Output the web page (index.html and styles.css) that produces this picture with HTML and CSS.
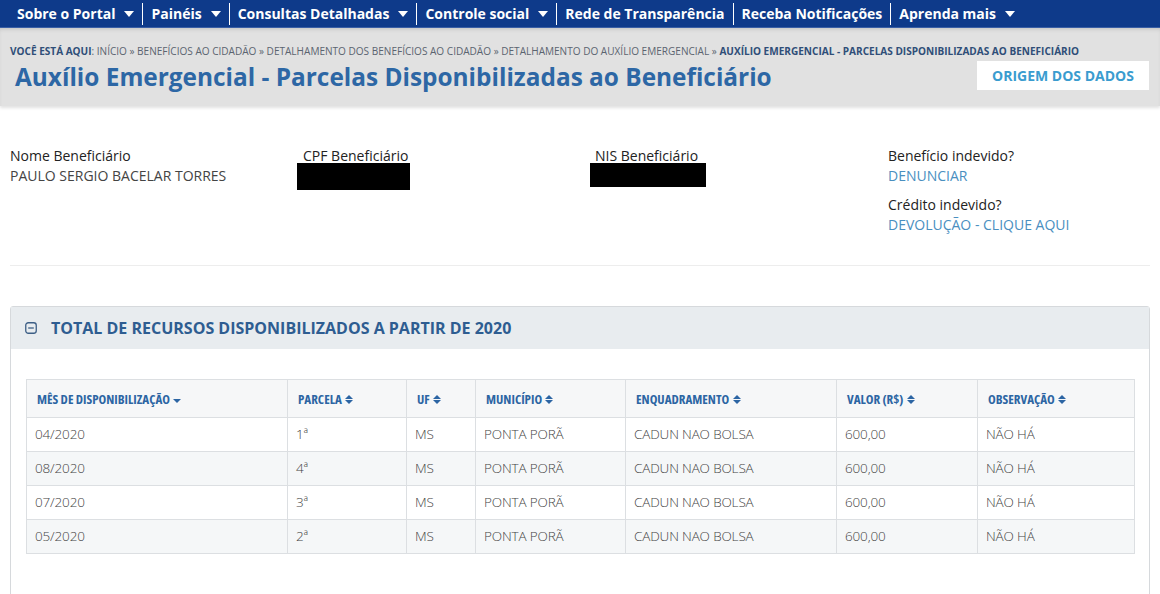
FILE: index.html
```html
<!DOCTYPE html>
<html lang="pt-BR">
<head>
<meta charset="utf-8">
<title>Auxílio Emergencial - Parcelas Disponibilizadas ao Beneficiário</title>
<link rel="stylesheet" href="styles.css">
</head>
<body>
<nav class="topnav">
  <ul class="menu">
    <li class="item first">Sobre o Portal <span class="caret"></span></li>
    <li class="item">Painéis <span class="caret"></span></li>
    <li class="item">Consultas Detalhadas <span class="caret"></span></li>
    <li class="item">Controle social <span class="caret"></span></li>
    <li class="item">Rede de Transparência</li>
    <li class="item">Receba Notificações</li>
    <li class="item">Aprenda mais <span class="caret"></span></li>
  </ul>
</nav>

<header class="pagehead">
  <div class="breadcrumb"><strong>VOCÊ ESTÁ AQUI</strong>: INÍCIO » BENEFÍCIOS AO CIDADÃO » DETALHAMENTO DOS BENEFÍCIOS AO CIDADÃO » DETALHAMENTO DO AUXÍLIO EMERGENCIAL » <b class="current">AUXÍLIO EMERGENCIAL - PARCELAS DISPONIBILIZADAS AO BENEFICIÁRIO</b></div>
  <div class="titlerow">
    <h1 class="title">Auxílio Emergencial - Parcelas Disponibilizadas ao Beneficiário</h1>
    <a class="origem">ORIGEM DOS DADOS</a>
  </div>
</header>

<section class="info">
  <div class="field">
    <div class="label">Nome Beneficiário</div>
    <div class="value">PAULO SERGIO BACELAR TORRES</div>
  </div>
  <div class="field">
    <div class="label">CPF Beneficiário</div>
    <div class="redact cpf"></div>
  </div>
  <div class="field">
    <div class="label">NIS Beneficiário</div>
    <div class="redact nis"></div>
  </div>
  <div class="field">
    <div class="label">Benefício indevido?</div>
    <a class="link">DENUNCIAR</a>
    <div class="label second">Crédito indevido?</div>
    <a class="link">DEVOLUÇÃO - CLIQUE AQUI</a>
  </div>
</section>

<hr class="divider">

<section class="panel">
  <div class="panel-head">
    <svg class="collapse" width="12" height="12" viewBox="0 0 12 12" aria-hidden="true">
      <rect x="0.75" y="0.75" width="10.5" height="10.5" rx="2.5" fill="none" stroke="#3d5f86" stroke-width="1.3"/>
      <line x1="3.2" y1="6" x2="8.8" y2="6" stroke="#3d5f86" stroke-width="1.3"/>
    </svg>
    <h2 class="panel-title">TOTAL DE RECURSOS DISPONIBILIZADOS A PARTIR DE 2020</h2>
  </div>
  <div class="panel-body">
    <table class="grid">
      <colgroup>
        <col class="c1"><col class="c2"><col class="c3"><col class="c4"><col class="c5"><col class="c6"><col class="c7">
      </colgroup>
      <thead>
        <tr>
          <th>MÊS DE DISPONIBILIZAÇÃO <span class="sort-down"></span></th>
          <th>PARCELA <span class="sort"></span></th>
          <th>UF <span class="sort"></span></th>
          <th>MUNICÍPIO <span class="sort"></span></th>
          <th>ENQUADRAMENTO <span class="sort"></span></th>
          <th>VALOR (R$) <span class="sort"></span></th>
          <th>OBSERVAÇÃO <span class="sort"></span></th>
        </tr>
      </thead>
      <tbody>
        <tr><td>04/2020</td><td>1ª</td><td>MS</td><td>PONTA PORÃ</td><td>CADUN NAO BOLSA</td><td>600,00</td><td>NÃO HÁ</td></tr>
        <tr><td>08/2020</td><td>4ª</td><td>MS</td><td>PONTA PORÃ</td><td>CADUN NAO BOLSA</td><td>600,00</td><td>NÃO HÁ</td></tr>
        <tr><td>07/2020</td><td>3ª</td><td>MS</td><td>PONTA PORÃ</td><td>CADUN NAO BOLSA</td><td>600,00</td><td>NÃO HÁ</td></tr>
        <tr><td>05/2020</td><td>2ª</td><td>MS</td><td>PONTA PORÃ</td><td>CADUN NAO BOLSA</td><td>600,00</td><td>NÃO HÁ</td></tr>
      </tbody>
    </table>
  </div>
</section>
</body>
</html>
```

FILE: styles.css
```css
* { box-sizing: border-box; }
html, body { margin: 0; padding: 0; background: #fff; }
body {
  font-family: "Open Sans", "Liberation Sans", sans-serif;
  color: #333;
  width: 1160px;
  height: 594px;
  overflow: hidden;
}

/* top navigation */
.topnav { background: #0e3a8a; height: 28px; border-bottom: 1px solid #3a5fa6; }
.menu {
  list-style: none; margin: 0; padding: 0 0 0 7px;
  display: flex; align-items: center; height: 27px;
}
.item {
  color: #fff; font-weight: 700; font-size: 14px; line-height: 22px;
  padding: 0 8px 0 8px; border-left: 1px solid #fff;
  letter-spacing: 0; white-space: nowrap;
  display: flex; align-items: center; gap: 7px;
}
.item.first { border-left: none; padding-left: 10px; }
.caret {
  display: inline-block; width: 0; height: 0;
  border-left: 5px solid transparent; border-right: 5px solid transparent;
  border-top: 6px solid #fff; margin-left: 2px;
}

/* page header */
.pagehead {
  background: #e1e1e1;
  padding: 16px 11px 13px 10px;
  box-shadow: 0 2px 3px rgba(0,0,0,0.12), inset 0 3px 4px -2px rgba(0,0,0,0.15);
}
.breadcrumb {
  font-size: 10.05px; line-height: 14px; color: #5b6470;
  letter-spacing: 0; white-space: nowrap;
}
.breadcrumb strong { color: #2f4e78; font-weight: 700; }
.breadcrumb .current { color: #2f4e78; font-weight: 700; }
.titlerow { display: flex; justify-content: space-between; align-items: center; margin-top: 3px; }
.title {
  margin: 0 0 0 5px; font-size: 24.4px; line-height: 32px; font-weight: 700;
  color: #2d67a5; letter-spacing: 0;
}
.origem {
  background: #fff; color: #3a9ccf; font-weight: 700; font-size: 14px;
  width: 172px; height: 29px; display: flex; align-items: center; justify-content: center;
  margin-top: -3px;
}

/* beneficiary info */
.info {
  display: grid; grid-template-columns: 293px 292px 293px 1fr;
  padding: 40px 10px 0 10px;
}
.label { font-size: 14px; line-height: 20px; color: #222; }
.label.second { margin-top: 9px; }
.value { font-size: 14px; line-height: 20px; color: #444; font-weight: 400; letter-spacing: 0; }
.link { display: block; font-size: 14px; line-height: 20px; color: #4a8fbf; font-weight: 400; }
.redact { background: #000; margin-top: -3px; }
.redact.cpf { width: 113px; height: 27px; margin-left: -6px; }
.redact.nis { width: 116px; height: 24px; margin-left: -5px; }

.divider { border: 0; border-top: 1px solid #ededed; margin: 30px 10px 0 10px; }

/* panel */
.panel {
  margin: 40px 10px 0 10px;
  border: 1px solid #d6d9dc; border-radius: 3px;
  height: 300px;
}
.panel-head {
  background: #e8ecef; height: 42px;
  display: flex; align-items: center; padding-left: 14px; gap: 14px;
}
.collapse { flex: none; }
.panel-title {
  margin: 0; font-size: 16px; font-weight: 700; color: #2e5d91; letter-spacing: 0;
}
.panel-body { padding: 30px 15px 0 15px; }

.grid { border-collapse: collapse; table-layout: fixed; width: 1108px; }
.c1 { width: 261px; } .c2 { width: 119px; } .c3 { width: 69px; } .c4 { width: 150px; }
.c5 { width: 211px; } .c6 { width: 141px; } .c7 { width: 157px; }
.grid th, .grid td { border: 1px solid #dcdfe2; text-align: left; padding: 0 10px 0 10px; }
.grid th {
  height: 38px; background: #f6f7f8; color: #2c65a3;
  font-size: 13px; font-weight: 700; font-stretch: 75%;
  letter-spacing: 0; white-space: nowrap;
}
.grid td { height: 34px; font-size: 13.5px; color: #444; font-weight: 300; letter-spacing: -0.15px; padding-left: 8px; padding-bottom: 2px; }
.grid th { padding-left: 10px; }
.grid tbody tr:nth-child(even) td { background: #f5f7f8; }
.sort, .sort-down { display: inline-block; width: 8px; height: 10px; vertical-align: -1px; position: relative; margin-left: 1px; }
.sort::before, .sort::after, .sort-down::after {
  content: ""; position: absolute; left: 0; width: 0; height: 0;
  border-left: 4px solid transparent; border-right: 4px solid transparent;
}
.sort::before { top: 0; border-bottom: 4px solid #2c65a3; }
.sort::after { top: 5px; border-top: 4px solid #2c65a3; }
.sort-down::after { top: 4px; border-top: 4px solid #2c65a3; }
```
